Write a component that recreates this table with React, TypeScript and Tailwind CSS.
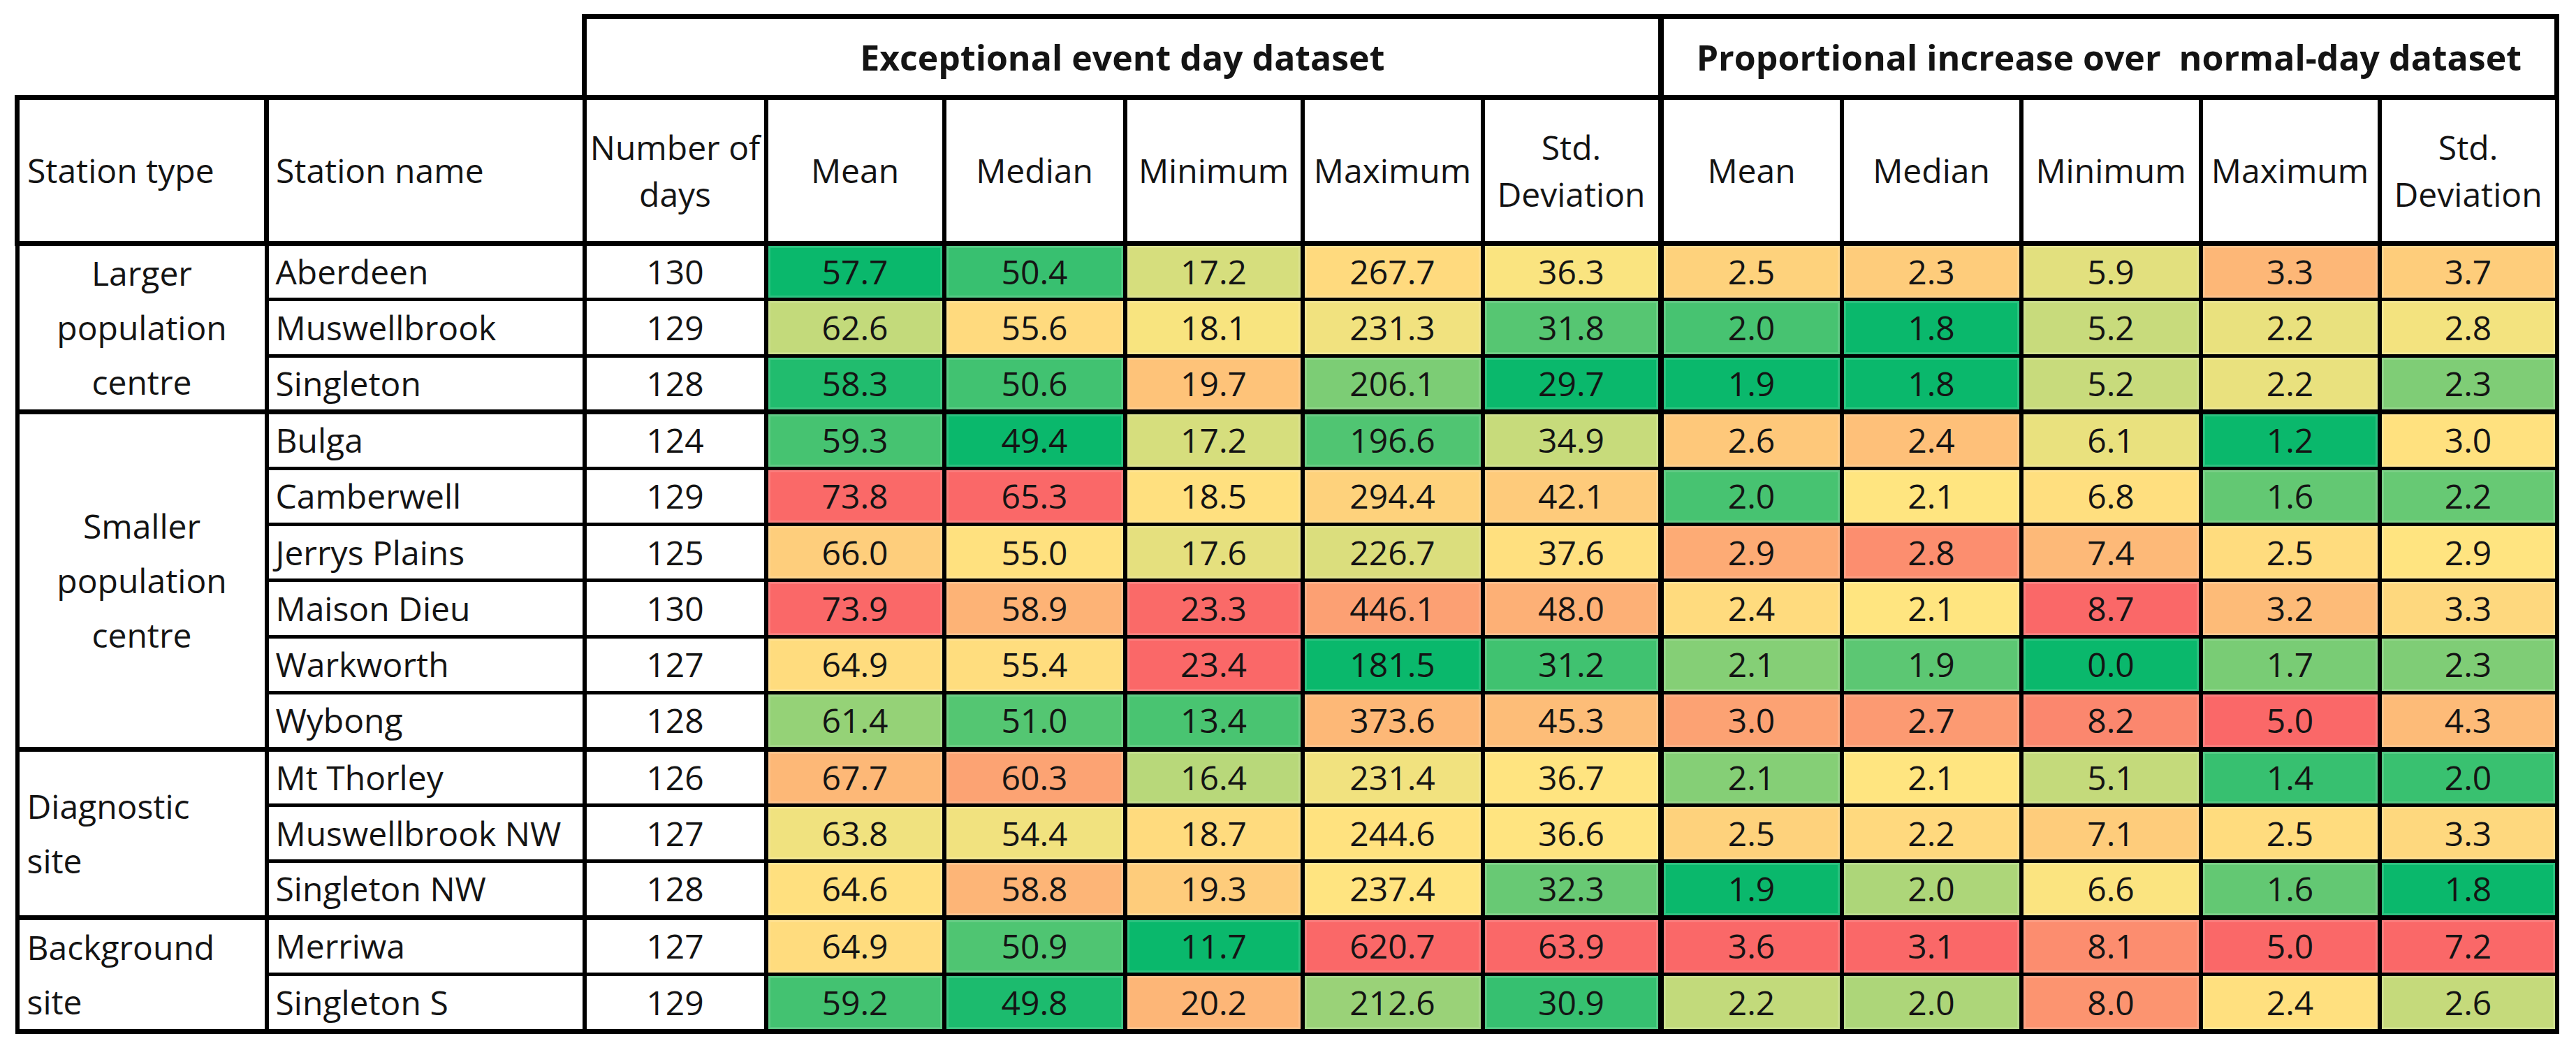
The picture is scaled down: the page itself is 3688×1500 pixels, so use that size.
import React from "react";

type Row = { name: string; days: number; v: number[] };
type Group = { label: string[]; align: "center" | "left"; rows: Row[] };

const groups: Group[] = [
  {
    label: ["Larger", "population", "centre"],
    align: "center",
    rows: [
      { name: "Aberdeen", days: 130, v: [57.7, 50.4, 17.2, 267.7, 36.3, 2.5, 2.3, 5.9, 3.3, 3.7] },
      { name: "Muswellbrook", days: 129, v: [62.6, 55.6, 18.1, 231.3, 31.8, 2.0, 1.8, 5.2, 2.2, 2.8] },
      { name: "Singleton", days: 128, v: [58.3, 50.6, 19.7, 206.1, 29.7, 1.9, 1.8, 5.2, 2.2, 2.3] },
    ],
  },
  {
    label: ["Smaller", "population", "centre"],
    align: "center",
    rows: [
      { name: "Bulga", days: 124, v: [59.3, 49.4, 17.2, 196.6, 34.9, 2.6, 2.4, 6.1, 1.2, 3.0] },
      { name: "Camberwell", days: 129, v: [73.8, 65.3, 18.5, 294.4, 42.1, 2.0, 2.1, 6.8, 1.6, 2.2] },
      { name: "Jerrys Plains", days: 125, v: [66.0, 55.0, 17.6, 226.7, 37.6, 2.9, 2.8, 7.4, 2.5, 2.9] },
      { name: "Maison Dieu", days: 130, v: [73.9, 58.9, 23.3, 446.1, 48.0, 2.4, 2.1, 8.7, 3.2, 3.3] },
      { name: "Warkworth", days: 127, v: [64.9, 55.4, 23.4, 181.5, 31.2, 2.1, 1.9, 0.0, 1.7, 2.3] },
      { name: "Wybong", days: 128, v: [61.4, 51.0, 13.4, 373.6, 45.3, 3.0, 2.7, 8.2, 5.0, 4.3] },
    ],
  },
  {
    label: ["Diagnostic", "site"],
    align: "left",
    rows: [
      { name: "Mt Thorley", days: 126, v: [67.7, 60.3, 16.4, 231.4, 36.7, 2.1, 2.1, 5.1, 1.4, 2.0] },
      { name: "Muswellbrook NW", days: 127, v: [63.8, 54.4, 18.7, 244.6, 36.6, 2.5, 2.2, 7.1, 2.5, 3.3] },
      { name: "Singleton NW", days: 128, v: [64.6, 58.8, 19.3, 237.4, 32.3, 1.9, 2.0, 6.6, 1.6, 1.8] },
    ],
  },
  {
    label: ["Background", "site"],
    align: "left",
    rows: [
      { name: "Merriwa", days: 127, v: [64.9, 50.9, 11.7, 620.7, 63.9, 3.6, 3.1, 8.1, 5.0, 7.2] },
      { name: "Singleton S", days: 129, v: [59.2, 49.8, 20.2, 212.6, 30.9, 2.2, 2.0, 8.0, 2.4, 2.6] },
    ],
  },
];

const allRows = groups.flatMap((g) => g.rows);

const G = [10, 184, 108];
const Y = [255, 229, 128];
const R = [250, 104, 104];

const stats = Array.from({ length: 10 }, (_, c) => {
  const vals = allRows.map((r) => r.v[c]).sort((a, b) => a - b);
  const n = vals.length;
  const pos = (n - 1) * 0.5;
  const lo = Math.floor(pos);
  const hi = Math.ceil(pos);
  const mid = vals[lo] + (vals[hi] - vals[lo]) * (pos - lo);
  return { min: vals[0], max: vals[n - 1], mid };
});

function lerp(a: number[], b: number[], t: number) {
  const k = Math.max(0, Math.min(1, t));
  return `rgb(${a.map((x, i) => Math.round(x + (b[i] - x) * k)).join(",")})`;
}

function colorFor(value: number, c: number) {
  const { min, max, mid } = stats[c];
  if (value <= mid) return lerp(G, Y, mid === min ? 1 : (value - min) / (mid - min));
  return lerp(Y, R, max === mid ? 0 : (value - mid) / (max - mid));
}

const COLS = [357, 455, 260, 255, 259, 254, 258, 255, 259, 257, 257, 256, 254];
const HEAD = ["Mean", "Median", "Minimum", "Maximum"];

export default function App() {
  return (
    <div
      className="w-[3688px] h-[1500px] bg-white text-[#141414] pt-[20px] pl-[21px]"
      style={{ fontFamily: '"Open Sans", "Noto Sans", sans-serif' }}
    >
      <table className="table-fixed border-collapse w-[3640px]">
        <colgroup>
          {COLS.map((w, i) => (
            <col key={i} style={{ width: w }} />
          ))}
        </colgroup>
        <tbody>
          <tr className="h-[116px]">
            <td colSpan={2} className="border-0"></td>
            <td
              colSpan={6}
              className="border-[7px] border-black text-center text-[50px] font-bold leading-none"
            >
              Exceptional event day dataset
            </td>
            <td
              colSpan={5}
              className="border-[7px] border-l-[8px] border-black text-center text-[50px] font-bold leading-none whitespace-pre"
            >
              {"Proportional increase over  normal-day dataset"}
            </td>
          </tr>
          <tr className="h-[209px] text-[48px]">
            <td className="border-[7px] border-black pl-[11px] leading-none whitespace-nowrap">Station type</td>
            <td className="border-[7px] border-x-[6px] border-black pl-[10px] leading-none whitespace-nowrap">
              Station name
            </td>
            <td className="border-[7px] border-x-[6px] border-black text-center leading-[67px]">
              Number of
              <br />
              days
            </td>
            {HEAD.map((h) => (
              <td key={"a" + h} className="border-[7px] border-x-[6px] border-black text-center leading-none">
                {h}
              </td>
            ))}
            <td className="border-[7px] border-l-[6px] border-r-[8px] border-black text-center leading-[67px]">
              Std.
              <br />
              Deviation
            </td>
            {HEAD.map((h, i) => (
              <td
                key={"b" + h}
                className={
                  "border-[7px] border-x-[6px] border-black text-center leading-none " +
                  (i === 0 ? "border-l-[8px]" : "")
                }
              >
                {h}
              </td>
            ))}
            <td className="border-[7px] border-x-[6px] border-black text-center leading-[67px]">
              Std.
              <br />
              Deviation
            </td>
          </tr>
          {groups.map((g) =>
            g.rows.map((r, ri) => {
              const first = ri === 0;
              const last = ri === g.rows.length - 1;
              const yb =
                (first ? "border-t-[7px] " : "border-t-[5px] ") + (last ? "border-b-[7px] " : "border-b-[5px] ");
              return (
                <tr key={r.name} className="h-[80.4px] text-[48px] leading-none">
                  {first && (
                    <td
                      rowSpan={g.rows.length}
                      className={
                        "border-[7px] border-x-[6px] border-black leading-[78px] " +
                        (g.align === "center" ? "text-center" : "text-left pl-[11px]")
                      }
                    >
                      {g.label.map((l, li) => (
                        <React.Fragment key={li}>
                          {li > 0 && <br />}
                          {l}
                        </React.Fragment>
                      ))}
                    </td>
                  )}
                  <td className={yb + "border-x-[6px] border-black pl-[10px] whitespace-nowrap"}>{r.name}</td>
                  <td className={yb + "border-x-[6px] border-black text-center"}>{r.days}</td>
                  {r.v.map((val, c) => (
                    <td
                      key={c}
                      className={
                        yb +
                        "border-x-[6px] border-black text-center shadow-[inset_0_0_0_3px_rgba(255,255,255,0.14)] " +
                        (c === 4 ? "border-r-[8px] " : "") +
                        (c === 5 ? "border-l-[8px] " : "")
                      }
                      style={{ backgroundColor: colorFor(val, c) }}
                    >
                      {val.toFixed(1)}
                    </td>
                  ))}
                </tr>
              );
            })
          )}
        </tbody>
      </table>
    </div>
  );
}
